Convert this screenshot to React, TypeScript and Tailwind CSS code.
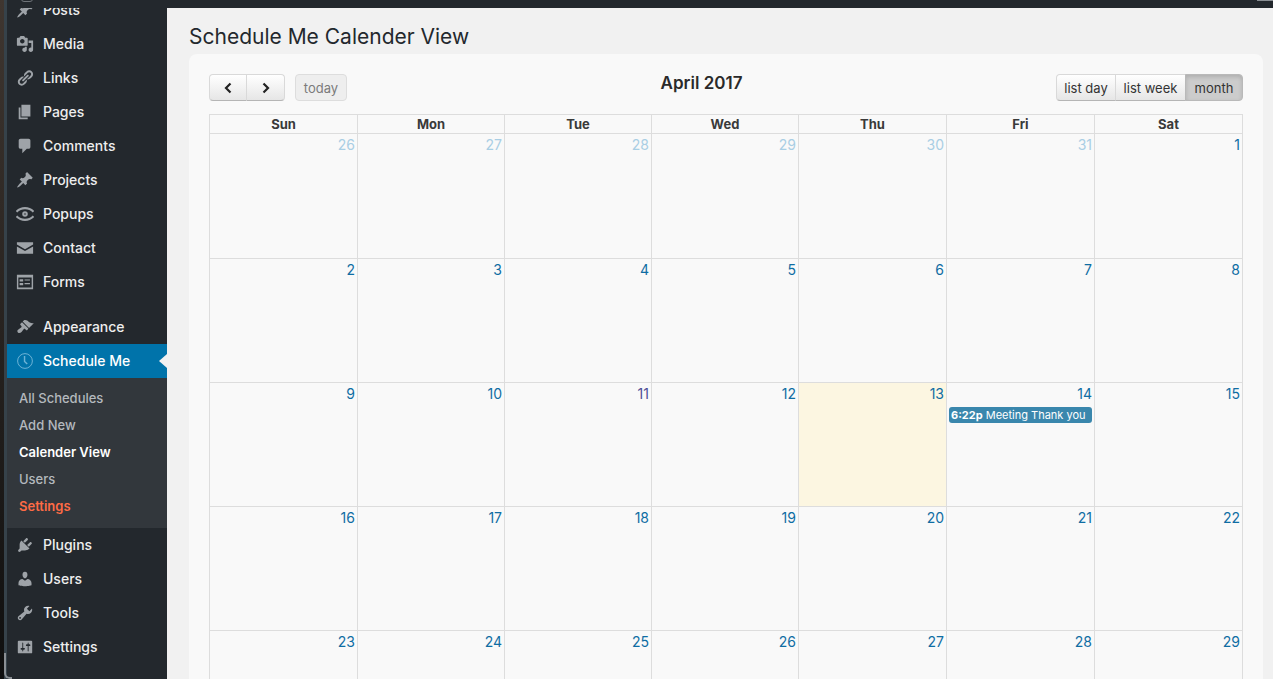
import type { ReactNode } from 'react'

const paths: Record<string, ReactNode> = {
  post: <path d="M10.44 3.02l1.82-1.82 6.36 6.35-1.83 1.82c-1.05-.68-2.48-.57-3.41.36l-.75.75c-.92.93-1.04 2.35-.35 3.41l-1.83 1.82-2.41-2.41-2.8 2.79c-.42.42-3.38 2.71-3.8 2.29s1.86-3.39 2.28-3.81l2.79-2.79L4.1 9.36l1.83-1.82c1.05.69 2.48.57 3.4-.36l.75-.75c.93-.92 1.05-2.35.36-3.41z" />,
  media: <path fillRule="evenodd" d="M13 11V4c0-.55-.45-1-1-1h-1.67L9 1H5L3.67 3H2c-.55 0-1 .45-1 1v7c0 .55.45 1 1 1h10c.55 0 1-.45 1-1zM7 4.5c1.38 0 2.5 1.12 2.5 2.5S8.38 9.5 7 9.5 4.5 8.38 4.5 7 5.62 4.5 7 4.5zM14 6h5v10.5c0 1.38-1.12 2.5-2.5 2.5S14 17.88 14 16.5s1.12-2.5 2.5-2.5c.17 0 .34.02.5.05V9h-3V6zm-4 8.05V13h2v3.5c0 1.38-1.12 2.5-2.5 2.5S7 17.88 7 16.5 8.12 14 9.5 14c.17 0 .34.02.5.05z" />,
  links: <path d="M17.74 2.76c1.68 1.69 1.68 4.41 0 6.1l-1.53 1.52c-1.12 1.12-2.7 1.47-4.14 1.09l2.62-2.61.76-.77.76-.76c.84-.84.84-2.2 0-3.04-.84-.85-2.2-.85-3.04 0l-.77.76-3.38 3.38c-.37-1.44-.02-3.02 1.1-4.14l1.52-1.53c1.69-1.68 4.42-1.68 6.1 0zM8.59 13.43l5.34-5.34c.42-.42.42-1.1 0-1.52-.44-.43-1.13-.39-1.53 0l-5.33 5.34c-.42.42-.42 1.1 0 1.52.44.43 1.13.39 1.52 0zm-.76 2.29l4.14-4.15c.38 1.44.03 3.02-1.09 4.14l-1.52 1.53c-1.69 1.68-4.41 1.68-6.1 0-1.68-1.68-1.68-4.42 0-6.1l1.53-1.52c1.12-1.12 2.7-1.47 4.14-1.1l-4.14 4.15c-.85.84-.85 2.2 0 3.05.84.84 2.2.84 3.04 0z" />,
  page: <path d="M6 15V2h10v13H6zm-1 1h8v2H3V5h2v11z" />,
  comments: <path d="M5 2h9c1.1 0 2 .9 2 2v7c0 1.1-.9 2-2 2h-2l-5 5v-5H5c-1.1 0-2-.9-2-2V4c0-1.1.9-2 2-2z" />,
  popups: (
    <g fill="none" stroke="currentColor">
      <path strokeWidth="2.4" d="M0.500 7.500C3.500 4.500 6.700 3.500 10 3.500s6.500 1 9.500 4" />
      <path strokeWidth="2.4" d="M0.500 12.500C3.500 15.500 6.700 16.500 10 16.500s6.500-1 9.500-4" />
      <circle cx="10" cy="10" r="2" strokeWidth="2.200" />
    </g>
  ),
  contact: <path d="M1 3.500h18v2.600l-9 5.200-9-5.200zM1 8.200l9 5.200 9-5.200v8.300H1z" />,
  forms: <path fillRule="evenodd" d="M1 2h18v16H1zM2.600 5v11h14.800V5zM4 7h4v2.500H4zM9.500 7.200h6v1.200h-6zM4 11h4v2.500H4zM9.500 11.200h6v1.200h-6z" />,
  appearance: <path d="M14.48 11.06L7.41 3.99l1.5-1.5c.5-.56 2.3-.47 3.51.32 1.21.8 1.43 1.28 2.91 2.1 1.18.64 2.45 1.26 4.45.85zm-.71.71L6.7 4.7 4.93 6.47c-.39.39-.39 1.02 0 1.41l1.06 1.06c.39.39.39 1.03 0 1.42-.6.6-1.43 1.11-2.21 1.69-.35.26-.7.53-1.01.84C1.43 13.23 1 14.91 2.08 16s2.76.82 4.08-.5c.31-.31.58-.66.85-1.02.57-.78 1.08-1.61 1.69-2.21.39-.39 1.02-.39 1.41 0l1.06 1.06c.39.39 1.02.39 1.41 0z" />,
  clock: (
    <g fill="none" stroke="currentColor">
      <circle cx="10" cy="10" r="8.200" strokeWidth="1.100" />
      <path strokeWidth="1.600" d="M9.500 4.500v6l3 2.800" />
    </g>
  ),
  plugins: <path d="M13.11 4.36L9.87 7.6 8 5.73l3.24-3.24c.35-.34 1.05-.2 1.56.32.52.51.66 1.21.31 1.55zm-8 1.77l.91-1.12 9.01 9.01-1.19.84c-.71.71-2.63 1.16-3.82 1.16H6.14L4.9 17.26c-.59.59-1.54.59-2.12 0-.59-.58-.59-1.53 0-2.12l1.24-1.24v-3.88c0-1.13.4-3.19 1.09-3.89zm7.26 3.97l3.24-3.24c.34-.35 1.04-.21 1.55.31.52.51.66 1.21.31 1.55l-3.24 3.25z" />,
  users: <path d="M10 9.250c-2.270 0-2.730-3.440-2.730-3.440C7 4.020 7.820 2 9.970 2c2.160 0 2.980 2.020 2.710 3.810 0 0-.41 3.440-2.680 3.440zm0 2.570L12.720 10c2.390 0 4.520 2.330 4.520 4.530v2.490s-3.650 1.130-7.240 1.130c-3.650 0-7.240-1.130-7.240-1.130v-2.490c0-2.250 1.940-4.480 4.470-4.480z" />,
  tools: <path fillRule="evenodd" d="M16.68 9.77c-1.34 1.34-3.3 1.67-4.95.99l-5.41 6.52c-.99.99-2.59.99-3.58 0s-.99-2.59 0-3.57l6.52-5.42c-.68-1.65-.35-3.61.99-4.95 1.28-1.28 3.12-1.62 4.72-1.06l-2.89 2.89 2.82 2.82 2.86-2.87c.53 1.58.18 3.39-1.08 4.65zM3.81 16.21c.4.39 1.04.39 1.43 0 .4-.4.4-1.04 0-1.43-.39-.4-1.03-.4-1.43 0-.39.39-.39 1.03 0 1.43z" />,
  settings: <path fillRule="evenodd" d="M18 16V4c0-.55-.45-1-1-1H3c-.55 0-1 .45-1 1v12c0 .55.45 1 1 1h14c.55 0 1-.45 1-1zM8 11h1c.55 0 1 .45 1 1s-.45 1-1 1H8v1.5c0 .28-.22.5-.5.5s-.5-.22-.5-.5V13H6c-.55 0-1-.45-1-1s.45-1 1-1h1V5.5c0-.28.22-.5.5-.5s.5.22.5.5V11zm5-2h-1c-.55 0-1-.45-1-1s.45-1 1-1h1V5.5c0-.28.22-.5.5-.5s.5.22.5.5V7h1c.55 0 1 .45 1 1s-.45 1-1 1h-1v5.5c0 .28-.22.5-.5.5s-.5-.22-.5-.5V9z" />,
}

function MenuItem({ icon, label, className = '' }: { icon: string; label: string; className?: string }) {
  return (
    <div className={`flex items-center h-[34px] pl-[9px] text-[#eeeeee] ${className}`}>
      <svg viewBox="0 0 20 20" fill="currentColor" className="w-[18px] h-[18px] text-[#9ea3a8] shrink-0">
        {paths[icon]}
      </svg>
      <span className="ml-[9px] mb-[2px] text-[14px] font-medium">{label}</span>
    </div>
  )
}

function Sidebar() {
  return (
    <aside className="w-[160px] shrink-0 bg-[#23282d] overflow-hidden">
      <div className="-mt-[15px]">
        <MenuItem icon="post" label="Posts" />
        <MenuItem icon="media" label="Media" />
        <MenuItem icon="links" label="Links" />
        <MenuItem icon="page" label="Pages" />
        <MenuItem icon="comments" label="Comments" />
        <MenuItem icon="post" label="Projects" />
        <MenuItem icon="popups" label="Popups" />
        <MenuItem icon="contact" label="Contact" />
        <MenuItem icon="forms" label="Forms" />
        <MenuItem icon="appearance" label="Appearance" className="mt-[11px]" />
        <div className="relative flex items-center h-[34px] pl-[9px] bg-[#0073aa] text-white">
          <svg viewBox="0 0 20 20" className="w-[18px] h-[18px] text-[#6db3d6] shrink-0">
            {paths.clock}
          </svg>
          <span className="ml-[9px] mb-[2px] text-[14px] font-medium">Schedule Me</span>
          <div className="absolute right-0 top-[10px] border-y-[7px] border-y-transparent border-r-[8px] border-r-[#f1f1f1]" />
        </div>
        <div className="bg-[#32373c] h-[150px] pt-[7px] pl-[12px] text-[13px] font-medium text-[#b4b9be]">
          <p className="h-[27px] leading-[27px]">All Schedules</p>
          <p className="h-[27px] leading-[27px]">Add New</p>
          <p className="h-[27px] leading-[27px] text-white font-semibold">Calender View</p>
          <p className="h-[27px] leading-[27px]">Users</p>
          <p className="h-[27px] leading-[27px] text-[#ff6b45] font-semibold">Settings</p>
        </div>
        <MenuItem icon="plugins" label="Plugins" />
        <MenuItem icon="users" label="Users" />
        <MenuItem icon="tools" label="Tools" />
        <MenuItem icon="settings" label="Settings" />
      </div>
    </aside>
  )
}

type Day = { n: number; faded?: boolean; visited?: boolean; today?: boolean; event?: boolean }

const weeks: Day[][] = [
  [26, 27, 28, 29, 30, 31].map((n) => ({ n, faded: true })).concat([{ n: 1, faded: false }]),
  [2, 3, 4, 5, 6, 7, 8].map((n) => ({ n })),
  [
    { n: 9 },
    { n: 10 },
    { n: 11, visited: true },
    { n: 12 },
    { n: 13, today: true },
    { n: 14, event: true },
    { n: 15 },
  ],
  [16, 17, 18, 19, 20, 21, 22].map((n) => ({ n })),
  [23, 24, 25, 26, 27, 28, 29].map((n) => ({ n })),
]

const dayNames = ['Sun', 'Mon', 'Tue', 'Wed', 'Thu', 'Fri', 'Sat']
const rowClass = 'grid grid-cols-[148px_147px_147px_147px_148px_148px_149px]'

function DayCell({ day, last }: { day: Day; last: boolean }) {
  const color = day.faded ? 'text-[#a9cee4]' : day.visited ? 'text-[#4f4f96]' : 'text-[#0f6da3]'
  return (
    <div className={`border-l border-[#dddddd] pt-[2px] ${last ? 'border-r' : ''} ${day.today ? 'bg-[#fcf6e1]' : ''}`}>
      <p className={`text-right pr-[2px] text-[14px] leading-[18px] ${color}`}>{day.n}</p>
      {day.event && (
        <div className="mt-[4px] mx-[2px] h-[16px] rounded-[3px] bg-[#3a87ad] text-white text-[11px] leading-[16px] pl-[2px] overflow-hidden whitespace-nowrap">
          <b>6:22p</b> Meeting Thank you
        </div>
      )}
    </div>
  )
}

function Calendar() {
  return (
    <div className="border-t border-[#dddddd] w-[1034px]">
      <div className={`${rowClass} h-[19px] border-b border-[#dddddd]`}>
        {dayNames.map((d, i) => (
          <div key={d} className={`border-l border-[#dddddd] text-center text-[13px] leading-[18px] font-bold text-[#3a3a3a] ${i === 6 ? 'border-r' : ''}`}>
            {d}
          </div>
        ))}
      </div>
      {weeks.map((week, w) => (
        <div key={w} className={`${rowClass} ${w === 0 ? 'h-[125px]' : 'h-[124px]'} border-b border-[#dddddd]`}>
          {week.map((day, i) => (
            <DayCell key={i} day={day} last={i === 6} />
          ))}
        </div>
      ))}
    </div>
  )
}

const btn = 'h-[27px] flex items-center justify-center border border-[#d9d9d9] border-b-[#b5b5b5] text-[13px] text-[#333333] bg-gradient-to-b from-white to-[#e6e6e6]'

function Toolbar() {
  return (
    <div className="flex items-start mb-[13px] h-[27px]">
      <div className="flex">
        <div className={`${btn} w-[38px] rounded-l-[4px]`}>
          <svg viewBox="0 0 12 12" className="w-[12px] h-[12px]" fill="none" stroke="#222" strokeWidth="2.2"><path d="M8.500 1.500 4 6l4.500 4.500" /></svg>
        </div>
        <div className={`${btn} w-[39px] -ml-px rounded-r-[4px]`}>
          <svg viewBox="0 0 12 12" className="w-[12px] h-[12px]" fill="none" stroke="#222" strokeWidth="2.2"><path d="M3.500 1.500 8 6l-4.500 4.500" /></svg>
        </div>
        <div className="ml-[10px] w-[52px] h-[27px] pt-[2px] flex items-center justify-center rounded-[4px] border border-[#dddddd] bg-[#eeeeee] text-[13px] text-[#7b7b7b]">today</div>
      </div>
      <h2 className="flex-1 text-center text-[17px] font-semibold leading-[18px] text-[#2a2a2a]">April 2017</h2>
      <div className="flex">
        <div className={`${btn} w-[60px] pt-[2px] rounded-l-[4px]`}>list day</div>
        <div className={`${btn} w-[71px] pt-[2px] -ml-px`}>list week</div>
        <div className="-ml-px w-[58px] h-[27px] pt-[2px] flex items-center justify-center rounded-r-[4px] border border-[#b9b9b9] bg-[#cccccc] text-[13px] text-[#333333] shadow-[inset_0_2px_4px_rgba(0,0,0,0.15)]">month</div>
      </div>
    </div>
  )
}

export default function App() {
  return (
    <div className="relative h-[679px] w-[1273px] overflow-hidden flex bg-[#23282d] font-['Inter','Liberation_Sans',sans-serif]">
      <div className="w-[7px] shrink-0 bg-gradient-to-b from-[#3f3630] to-[#0f0f0f] border-r-[3px] border-[#36424a]" />
      <div className="flex-1 min-w-0 flex flex-col">
        <div className="relative h-[8px] shrink-0 bg-[#23282d]">
          <div className="absolute left-[14px] -top-[4px] w-[12px] h-[6px] rounded-full border border-[#6f7479]" />
          <div className="absolute right-0 top-0 w-[16px] h-px bg-[#8a8f94]" />
        </div>
        <div className="flex-1 min-h-0 flex">
          <Sidebar />
          <main className="flex-1 min-w-0 bg-[#f1f1f1] pl-[22px] pr-[10px]">
            <h1 className="h-[46px] pt-[15px] text-[21px] leading-[28px] text-[#23282d]">Schedule Me Calender View</h1>
            <div className="bg-[#f9f9f9] rounded-t-[8px] px-[20px] pt-[20px] h-[640px]">
              <Toolbar />
              <Calendar />
            </div>
          </main>
        </div>
      </div>
      <div className="absolute left-[4px] top-[653px] w-[8px] h-[26px] rounded-bl-[6px] border-l-2 border-b-2 border-[#8a8f94]" />
    </div>
  )
}
